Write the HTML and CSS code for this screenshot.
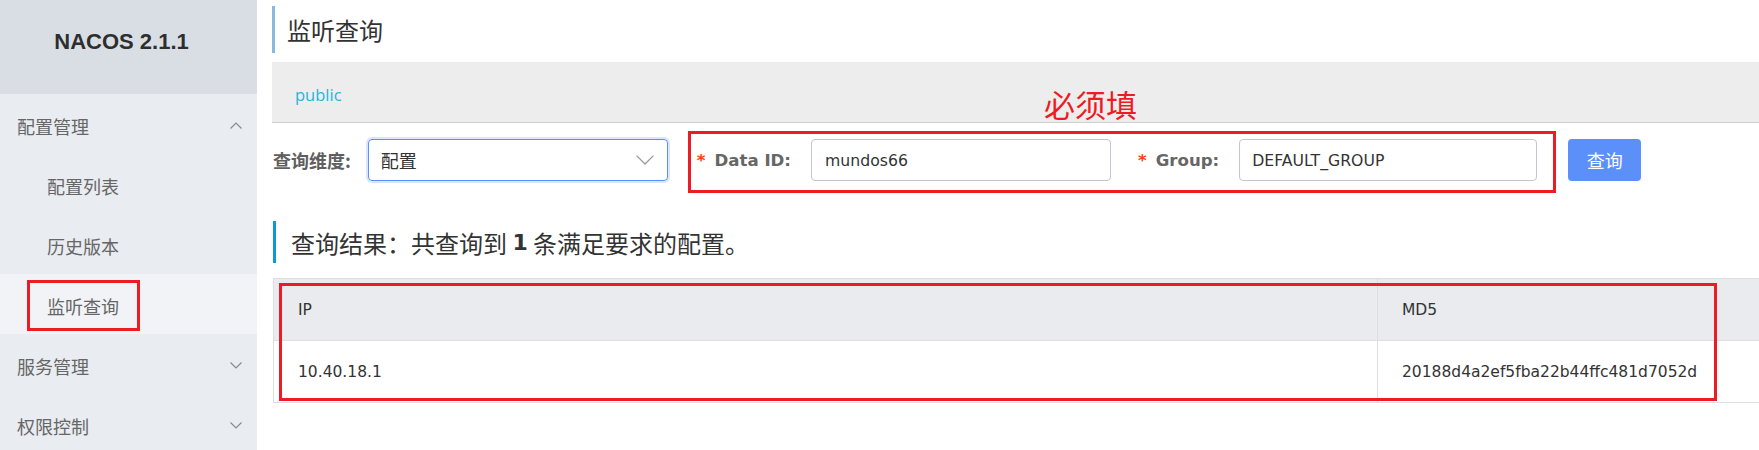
FILE: index.html
```html
<!DOCTYPE html>
<html lang="zh-CN">
<head>
<meta charset="utf-8">
<title>NACOS - 监听查询</title>
<link rel="stylesheet" href="styles.css">
</head>
<body>
<aside class="sidebar">
  <div class="brand">NACOS 2.1.1</div>
  <ul class="menu">
    <li class="menu-group">
      <div class="menu-title">配置管理<svg class="chev" viewBox="0 0 12 7" width="12" height="7"><path d="M0.5 6.5 L6 1 L11.5 6.5" fill="none" stroke="#8a8a8a" stroke-width="1.2"/></svg></div>
      <ul class="submenu">
        <li>配置列表</li>
        <li>历史版本</li>
        <li class="active"><span>监听查询</span><span class="annot annot-side"></span></li>
      </ul>
    </li>
    <li class="menu-group">
      <div class="menu-title">服务管理<svg class="chev" viewBox="0 0 12 7" width="12" height="7"><path d="M0.5 0.5 L6 6 L11.5 0.5" fill="none" stroke="#8a8a8a" stroke-width="1.2"/></svg></div>
    </li>
    <li class="menu-group">
      <div class="menu-title">权限控制<svg class="chev" viewBox="0 0 12 7" width="12" height="7"><path d="M0.5 0.5 L6 6 L11.5 0.5" fill="none" stroke="#8a8a8a" stroke-width="1.2"/></svg></div>
    </li>
  </ul>
</aside>

<main class="main">
  <h1 class="page-title">监听查询</h1>
  <div class="ns-bar"><span class="ns-link">public</span></div>
  <div class="annot-text">必须填</div>

  <form class="query-form">
    <div class="field">
      <label class="form-label cjk">查询维度:</label>
      <div class="select">
        <span>配置</span>
        <svg class="select-arrow" viewBox="0 0 18 10" width="18" height="10"><path d="M0.6 0.6 L9 9 L17.4 0.6" fill="none" stroke="#9a9a9a" stroke-width="1.3"/></svg>
      </div>
    </div>
    <div class="required-group">
      <div class="field">
        <label class="form-label"><span class="star">*</span>Data ID:</label>
        <div class="input input-dataid">mundos66</div>
      </div>
      <div class="field field-group">
        <label class="form-label"><span class="star">*</span>Group:</label>
        <div class="input input-group">DEFAULT_GROUP</div>
      </div>
      <span class="annot annot-form"></span>
    </div>
    <button type="button" class="btn-primary">查询</button>
  </form>

  <h2 class="result-title">查询结果：共查询到 <b>1</b> 条满足要求的配置。</h2>

  <div class="table-wrap">
    <table class="result-table">
      <thead>
        <tr><th class="col-ip">IP</th><th>MD5</th></tr>
      </thead>
      <tbody>
        <tr><td class="col-ip">10.40.18.1</td><td>20188d4a2ef5fba22b44ffc481d7052d</td></tr>
      </tbody>
    </table>
    <span class="annot annot-table"></span>
  </div>
</main>
</body>
</html>
```
FILE: styles.css
```css
* { box-sizing: border-box; }

html, body {
  margin: 0;
  padding: 0;
}

body {
  display: flex;
  width: 1759px;
  height: 450px;
  overflow: hidden;
  background: #fff;
  font-family: "DejaVu Sans", "Noto Sans CJK SC", sans-serif;
  color: #333;
}

/* ---------- sidebar ---------- */
.sidebar {
  width: 257px;
  flex: 0 0 257px;
  background: #e9ecf1;
  height: 100%;
}

.brand {
  height: 94px;
  background: #d9dee5;
  display: flex;
  align-items: center;
  justify-content: center;
  padding: 0 14px 10px 0;
  font-family: "Liberation Sans", Arial, sans-serif;
  font-weight: bold;
  font-size: 22px;
  color: #2e2e2e;
}

.menu, .submenu {
  list-style: none;
  margin: 0;
  padding: 0;
}

.menu-title,
.submenu li {
  height: 60px;
  display: flex;
  align-items: center;
  font-family: "Noto Sans CJK SC", sans-serif;
  font-size: 18px;
  color: #666;
}

.menu-title {
  justify-content: space-between;
  padding: 3px 15px 0 17px;
}

.submenu li {
  padding: 3px 0 0 47px;
  position: relative;
}

.submenu li.active {
  background: #f2f3f6;
}

.chev { display: block; }

/* annotation boxes (red rectangles drawn over content) */
.annot {
  position: absolute;
  border: 3px solid #ed1c24;
  pointer-events: none;
}

.annot-side {
  left: 27px;
  top: 6px;
  width: 113px;
  height: 51px;
}

/* ---------- main ---------- */
.main {
  flex: 1;
  min-width: 0;
  position: relative;
  padding: 6px 0 0 15px;
}

.page-title {
  margin: 0;
  height: 47px;
  border-left: 3px solid #8ab8e1;
  padding-left: 12px;
  display: flex;
  align-items: center;
  font-family: "Noto Sans CJK SC", sans-serif;
  font-weight: normal;
  font-size: 24px;
  color: #333;
}

.ns-bar {
  margin-top: 9px;
  height: 61px;
  background: #ededed;
  border-bottom: 1px solid #cfcfcf;
  display: flex;
  align-items: center;
  padding: 4px 0 0 23px;
}

.ns-link {
  font-family: "Open Sans", sans-serif;
  font-size: 16.5px;
  color: #1bb7de;
}

.annot-text {
  position: absolute;
  left: 787px;
  top: 88px;
  font-family: "Noto Sans CJK SC", sans-serif;
  font-size: 31px;
  line-height: 32px;
  color: #ed1c24;
}

/* ---------- form ---------- */
.query-form {
  margin: 16px 0 0 0;
  height: 42px;
  display: flex;
  align-items: center;
}

.field {
  display: flex;
  align-items: center;
}

.form-label {
  font-weight: bold;
  font-size: 16.6px;
  color: #666;
  margin-right: 20px;
  white-space: nowrap;
}

.form-label.cjk {
  font-family: "Noto Sans CJK SC", sans-serif;
  font-size: 18px;
  color: #5f5f5f;
  margin: 0 17px 0 1px;
}

.star {
  color: #ff3a1a;
  margin-right: 9px;
}

.select {
  width: 300px;
  height: 42px;
  border: 1px solid #5b8ff9;
  border-radius: 4px;
  box-shadow: 0 0 0 2px #dbe6fe;
  display: flex;
  align-items: center;
  justify-content: space-between;
  padding: 0 13px 0 12px;
  font-family: "Noto Sans CJK SC", sans-serif;
  font-size: 18px;
  color: #333;
}

.select-arrow { display: block; }

.required-group {
  position: relative;
  display: flex;
  align-items: center;
  margin-left: 29px;
}

.input {
  height: 42px;
  border: 1px solid #c4c6cf;
  border-radius: 4px;
  display: flex;
  align-items: center;
  padding-left: 13px;
  font-size: 15.7px;
  color: #333;
}

.input-dataid { width: 300px; }
.input-group { width: 298px; padding-left: 12px; }

.field-group { margin-left: 27px; }

.annot-form {
  left: -9px;
  right: -19px;
  top: -8px;
  bottom: -12px;
}

.btn-primary {
  margin-left: 31px;
  width: 73px;
  height: 42px;
  border: none;
  border-radius: 4px;
  background: #5b8ff9;
  color: #fff;
  font-family: "Noto Sans CJK SC", sans-serif;
  font-size: 18px;
  padding: 0;
}

/* ---------- results ---------- */
.result-title {
  margin: 40px 0 0 1px;
  height: 42px;
  border-left: 3px solid #0b9bd1;
  padding-left: 15px;
  display: flex;
  align-items: center;
  font-family: "Noto Sans CJK SC", sans-serif;
  font-weight: normal;
  font-size: 24px;
  color: #333;
  white-space: pre;
}

.result-title b {
  font-family: "DejaVu Sans", sans-serif;
  font-weight: bold;
  font-size: 22px;
}

.table-wrap {
  position: relative;
  margin: 15px 0 0 1px;
}

.result-table {
  width: 1500px;
  border-collapse: collapse;
  table-layout: fixed;
  border: 1px solid #dcdee3;
  font-size: 15.5px;
  color: #333;
}

.result-table th,
.result-table td {
  height: 62px;
  padding: 0 0 0 24px;
  text-align: left;
  font-weight: normal;
  border-bottom: 1px solid #dcdee3;
}

.result-table th {
  background: #e9ebef;
}

.result-table .col-ip {
  width: 1104px;
  border-right: 1px solid #dcdee3;
}

.annot-table {
  left: 6px;
  top: 5px;
  width: 1438px;
  height: 118px;
}
```
